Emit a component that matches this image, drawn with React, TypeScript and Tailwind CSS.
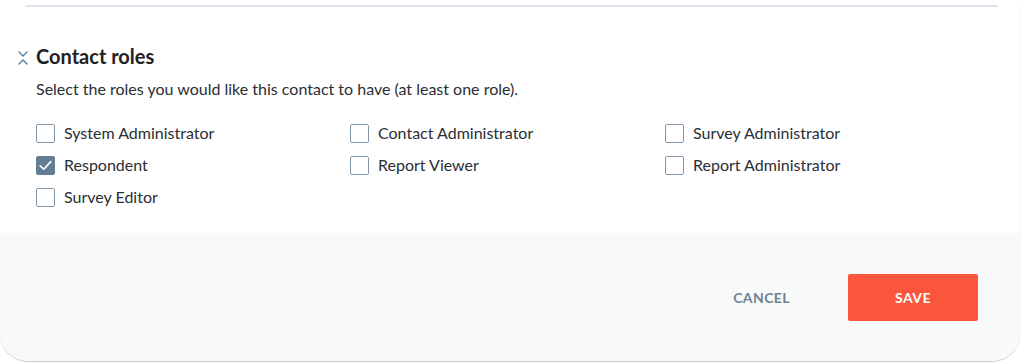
import { useState } from 'react'

const roles = [
  'System Administrator',
  'Contact Administrator',
  'Survey Administrator',
  'Respondent',
  'Report Viewer',
  'Report Administrator',
  'Survey Editor',
]

function Check({ label, checked, onToggle }: { label: string; checked: boolean; onToggle: () => void }) {
  return (
    <label className="flex items-center h-8 cursor-pointer select-none" onClick={onToggle}>
      <span
        className={
          checked
            ? 'w-[19px] h-[19px] rounded-[2px] bg-[#637d95] border border-[#637d95] flex items-center justify-center'
            : 'w-[19px] h-[19px] rounded-[2px] bg-white border-[1.5px] border-[#8297aa]'
        }
      >
        {checked && (
          <svg width="15" height="15" viewBox="0 0 15 15" fill="none">
            <path d="M2.2 7.8 L5.8 11.2 L12.8 3.6" stroke="white" strokeWidth="1.6" strokeLinecap="round" strokeLinejoin="round" />
          </svg>
        )}
      </span>
      <span className="ml-[9px] text-[16px] text-[#2b2e33] leading-5">{label}</span>
    </label>
  )
}

export default function App() {
  const [selected, setSelected] = useState<string[]>(['Respondent'])

  const toggle = (role: string) =>
    setSelected(prev => (prev.includes(role) ? prev.filter(r => r !== role) : [...prev, role]))

  return (
    <div className="w-[1024px] h-[363px] bg-white overflow-hidden" style={{ fontFamily: 'Lato, "Open Sans", sans-serif' }}>
      <div className="w-[1020px] h-[361px] bg-white rounded-b-[28px] shadow-[0_1px_1px_rgba(0,0,0,0.22)] flex flex-col overflow-hidden">
        {/* 上の区切り線 */}
        <div className="pt-[5px] pl-[25px]">
          <div className="w-[973px] h-[2px] bg-[#dce3ea] rounded-full" />
        </div>

        <div className="pl-[18px] pt-[35px]">
          <div className="flex items-center h-7">
            <svg width="10" height="16" viewBox="0 0 10 16" fill="none" className="mt-[3px]">
              <path d="M1 2 L5 6 L9 2" stroke="#5a7d9c" strokeWidth="1.4" strokeLinecap="round" strokeLinejoin="round" />
              <path d="M1 14 L5 10 L9 14" stroke="#5a7d9c" strokeWidth="1.4" strokeLinecap="round" strokeLinejoin="round" />
            </svg>
            <h2 className="ml-[8px] text-[20px] font-bold text-[#1f2124] leading-7">Contact roles</h2>
          </div>
        </div>

        <div className="pl-[36px] pt-[9px]">
          <p className="text-[16px] text-[#2b2e33] leading-5">
            Select the roles you would like this contact to have (at least one role).
          </p>
          <div className="grid grid-cols-[314px_315px_314px] mt-[18px]">
            {roles.map(role => (
              <Check key={role} label={role} checked={selected.includes(role)} onToggle={() => toggle(role)} />
            ))}
          </div>
        </div>

        {/* フッター */}
        <div className="mt-auto h-[128px] bg-[#f8fafa] flex items-start justify-end pt-[41px] pr-[42px]">
          <button className="h-[47px] px-[26px] text-[14px] font-bold tracking-[0.03em] text-[#6d8296]">
            CANCEL
          </button>
          <button className="ml-[32px] w-[130px] h-[47px] rounded-[2px] bg-[#fc553d] text-white text-[14px] font-bold tracking-[0.03em]">
            SAVE
          </button>
        </div>
      </div>
    </div>
  )
}
